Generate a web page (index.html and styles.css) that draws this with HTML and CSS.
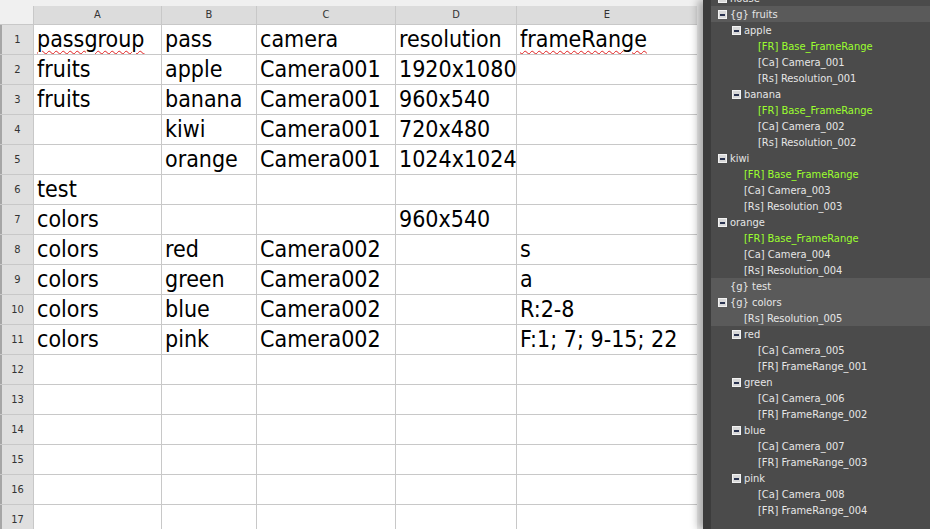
FILE: index.html
```html
<!DOCTYPE html>
<html lang="en">
<head>
<meta charset="UTF-8">
<title>Pass Sheet</title>
<link rel="stylesheet" href="styles.css">
</head>
<body>
<div class="app">
    <div class="sheet">
        <div class="grid">
            <div class="corner"></div>
            <div class="ch">A</div><div class="ch">B</div><div class="ch">C</div><div class="ch">D</div><div class="ch">E</div>

            <div class="rh">1</div><div class="c"><span class="typo">passgroup</span></div><div class="c">pass</div><div class="c">camera</div><div class="c">resolution</div><div class="c"><span class="typo">frameRange</span></div>
            <div class="rh">2</div><div class="c">fruits</div><div class="c">apple</div><div class="c">Camera001</div><div class="c">1920x1080</div><div class="c"></div>
            <div class="rh">3</div><div class="c">fruits</div><div class="c">banana</div><div class="c">Camera001</div><div class="c">960x540</div><div class="c"></div>
            <div class="rh">4</div><div class="c"></div><div class="c">kiwi</div><div class="c">Camera001</div><div class="c">720x480</div><div class="c"></div>
            <div class="rh">5</div><div class="c"></div><div class="c">orange</div><div class="c">Camera001</div><div class="c">1024x1024</div><div class="c"></div>
            <div class="rh">6</div><div class="c">test</div><div class="c"></div><div class="c"></div><div class="c"></div><div class="c"></div>
            <div class="rh">7</div><div class="c">colors</div><div class="c"></div><div class="c"></div><div class="c">960x540</div><div class="c"></div>
            <div class="rh">8</div><div class="c">colors</div><div class="c">red</div><div class="c">Camera002</div><div class="c"></div><div class="c">s</div>
            <div class="rh">9</div><div class="c">colors</div><div class="c">green</div><div class="c">Camera002</div><div class="c"></div><div class="c">a</div>
            <div class="rh">10</div><div class="c">colors</div><div class="c">blue</div><div class="c">Camera002</div><div class="c"></div><div class="c">R:2-8</div>
            <div class="rh">11</div><div class="c">colors</div><div class="c">pink</div><div class="c">Camera002</div><div class="c"></div><div class="c">F:1; 7; 9-15; 22</div>
            <div class="rh">12</div><div class="c"></div><div class="c"></div><div class="c"></div><div class="c"></div><div class="c"></div>
            <div class="rh">13</div><div class="c"></div><div class="c"></div><div class="c"></div><div class="c"></div><div class="c"></div>
            <div class="rh">14</div><div class="c"></div><div class="c"></div><div class="c"></div><div class="c"></div><div class="c"></div>
            <div class="rh">15</div><div class="c"></div><div class="c"></div><div class="c"></div><div class="c"></div><div class="c"></div>
            <div class="rh">16</div><div class="c"></div><div class="c"></div><div class="c"></div><div class="c"></div><div class="c"></div>
            <div class="rh">17</div><div class="c"></div><div class="c"></div><div class="c"></div><div class="c"></div><div class="c"></div>
        </div>
    </div>

    <div class="panel">
        <div class="tree">
            <div class="row l0"><span class="box"></span>house</div>
            <div class="row l0 sel"><span class="box"></span>{g} fruits</div>
            <div class="row l1"><span class="box"></span>apple</div>
            <div class="row l2 green">[FR] Base_FrameRange</div>
            <div class="row l2">[Ca] Camera_001</div>
            <div class="row l2">[Rs] Resolution_001</div>
            <div class="row l1"><span class="box"></span>banana</div>
            <div class="row l2 green">[FR] Base_FrameRange</div>
            <div class="row l2">[Ca] Camera_002</div>
            <div class="row l2">[Rs] Resolution_002</div>
            <div class="row l0"><span class="box"></span>kiwi</div>
            <div class="row l1 green">[FR] Base_FrameRange</div>
            <div class="row l1">[Ca] Camera_003</div>
            <div class="row l1">[Rs] Resolution_003</div>
            <div class="row l0"><span class="box"></span>orange</div>
            <div class="row l1 green">[FR] Base_FrameRange</div>
            <div class="row l1">[Ca] Camera_004</div>
            <div class="row l1">[Rs] Resolution_004</div>
            <div class="row l0 sel"><span class="nobox"></span>{g} test</div>
            <div class="row l0 sel"><span class="box"></span>{g} colors</div>
            <div class="row l1 sel">[Rs] Resolution_005</div>
            <div class="row l1"><span class="box"></span>red</div>
            <div class="row l2">[Ca] Camera_005</div>
            <div class="row l2">[FR] FrameRange_001</div>
            <div class="row l1"><span class="box"></span>green</div>
            <div class="row l2">[Ca] Camera_006</div>
            <div class="row l2">[FR] FrameRange_002</div>
            <div class="row l1"><span class="box"></span>blue</div>
            <div class="row l2">[Ca] Camera_007</div>
            <div class="row l2">[FR] FrameRange_003</div>
            <div class="row l1"><span class="box"></span>pink</div>
            <div class="row l2">[Ca] Camera_008</div>
            <div class="row l2">[FR] FrameRange_004</div>
        </div>
    </div>
</div>
</body>
</html>
```

FILE: styles.css
```css
html, body {
    margin: 0;
    padding: 0;
    height: 100%;
    overflow: hidden;
}
body {
    font-family: "DejaVu Sans Condensed", "DejaVu Sans", sans-serif;
    font-stretch: condensed;
    background-color: #4b4b4b;
}
.app {
    display: flex;
    height: 529px;
}
.sheet {
    width: 703px;
    flex: none;
    padding-top: 6px;
    background-color: #f0f0f0;
}
.grid {
    width: 697px;
    display: grid;
    grid-template-columns: 33px 127px 94px 138px 120px 180px;
    grid-template-rows: 18px;
    grid-auto-rows: 29px;
    gap: 1px;
    background-color: #c8c8c8;
}
.corner {
    background-color: #f0f0f0;
}
.ch {
    background-color: #dcdcdc;
    color: #333;
    font-size: 11px;
    line-height: 18px;
    text-align: center;
}
.rh {
    background-color: #dfdfdf;
    border-left: 2px solid #a6a6a6;
    color: #333;
    font-size: 11px;
    line-height: 29px;
    text-align: center;
}
.c {
    background-color: #fff;
    color: #000;
    font-size: 23px;
    line-height: 29px;
    padding-left: 3px;
    white-space: nowrap;
    overflow: hidden;
}
.typo {
    text-decoration: underline wavy #e02020;
    text-decoration-thickness: 1px;
    text-underline-offset: 3px;
}
.panel {
    flex: 1;
    border-left: 8px solid #3c3c3c;
    box-shadow: -5px 0 8px rgba(0, 0, 0, 0.3);
    overflow: hidden;
}
.tree {
    margin-top: -10px;
}
.row {
    display: flex;
    align-items: center;
    height: 16px;
    font-size: 11px;
    color: #e6e6e6;
    white-space: nowrap;
}
.row.l0 {
    padding-left: 7px;
}
.row.l1 {
    padding-left: 21px;
}
.row.l2 {
    padding-left: 35px;
}
.row.l1:not(:has(.box)) {
    padding-left: 33px;
}
.row.l2:not(:has(.box)) {
    padding-left: 47px;
}
.row.sel {
    background-color: #5a5a5a;
}
.green {
    color: #9cff2e;
}
.box, .nobox {
    flex: none;
    width: 9px;
    height: 9px;
    margin-right: 3px;
    position: relative;
}
.box {
    box-sizing: border-box;
    background-color: #d8d8d8;
    border: 1px solid #f2f2f2;
}
.box::after {
    content: "";
    position: absolute;
    left: 1px;
    top: 3px;
    width: 5px;
    height: 2px;
    background-color: #2a3350;
}
```
